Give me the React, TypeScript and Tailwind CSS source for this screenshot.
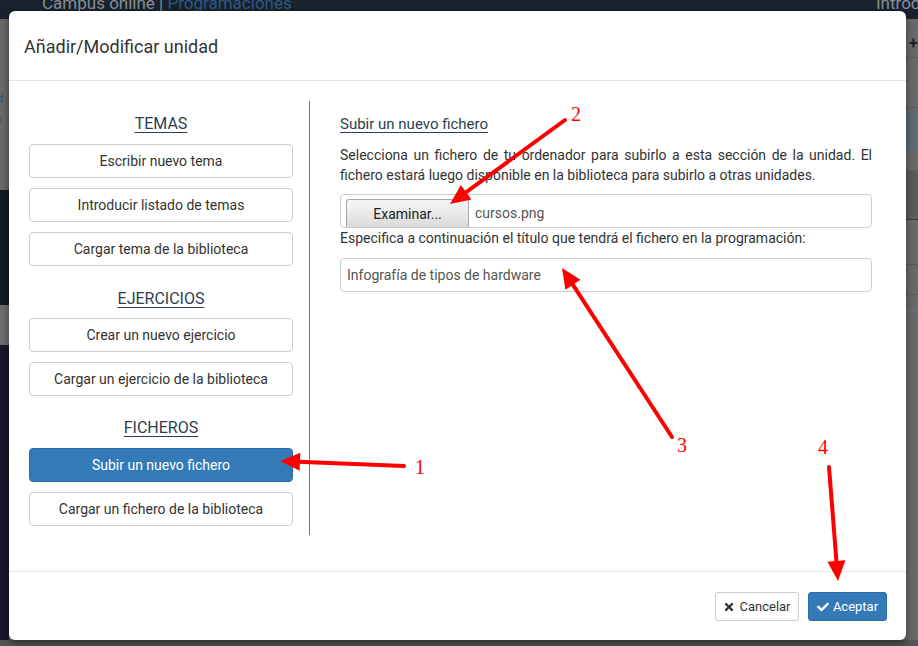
import { FaCheck, FaTimes } from "react-icons/fa";

const font = { fontFamily: "Roboto, 'Liberation Sans', sans-serif" };

type Pt = [number, number];

function Arrow({ from, to }: { from: Pt; to: Pt }) {
  const dx = to[0] - from[0];
  const dy = to[1] - from[1];
  const len = Math.hypot(dx, dy);
  const ux = dx / len;
  const uy = dy / len;
  const head = 20;
  const half = 9;
  const bx = to[0] - ux * head;
  const by = to[1] - uy * head;
  const pts = [
    `${to[0]},${to[1]}`,
    `${bx - uy * half},${by + ux * half}`,
    `${bx + uy * half},${by - ux * half}`,
  ].join(" ");
  return (
    <g>
      <line x1={from[0]} y1={from[1]} x2={bx + ux * 2} y2={by + uy * 2} stroke="#ff0000" strokeWidth={4} strokeLinecap="round" />
      <polygon points={pts} fill="#ff0000" />
    </g>
  );
}

function Annotations() {
  return (
    <svg className="pointer-events-none absolute inset-0" width={918} height={646} viewBox="0 0 918 646">
      <Arrow from={[404, 466]} to={[280, 461]} />
      <Arrow from={[565, 120]} to={[450, 204]} />
      <Arrow from={[672, 437]} to={[562, 268]} />
      <Arrow from={[829, 467]} to={[838, 581]} />
      <g fill="#ff0000" fontSize={20} fontFamily="'Liberation Serif', serif">
        <text x={415} y={474}>1</text>
        <text x={571} y={121}>2</text>
        <text x={677} y={452}>3</text>
        <text x={818} y={454}>4</text>
      </g>
    </svg>
  );
}

function SideButton({ label, active }: { label: string; active?: boolean }) {
  return (
    <div
      className={
        active
          ? "flex h-[34px] items-center justify-center rounded-[4px] border border-[#2e6da4] bg-[#337ab7] text-[14px] text-white"
          : "flex h-[34px] items-center justify-center rounded-[4px] border border-[#cccccc] bg-white text-[14px] text-[#333]"
      }
    >
      {label}
    </div>
  );
}

function Heading({ children }: { children: string }) {
  return (
    <div className="flex h-[22px] items-center justify-center text-[16px] text-[#2c3e50] underline underline-offset-[3px]">
      {children}
    </div>
  );
}

function Backdrop() {
  return (
    <div className="flex h-[646px] w-[918px] flex-col bg-[#6b6b6b]">
      <div className="flex h-[19px] items-end justify-between bg-[#19222d] px-[42px] text-[17px] leading-[19px] text-[#8a9099]">
        <div className="-translate-y-[6px]">
          Campus online | <span className="text-[#2d5a84]">Programaciones</span>
        </div>
        <div className="-mr-[42px] -translate-y-[6px] w-[42px] overflow-hidden whitespace-nowrap">Introd</div>
      </div>
      <div className="flex flex-1">
        <div className="flex w-[9px] flex-col">
          <div className="h-[171px] bg-[#6b6b6b] pt-[70px] text-[13px] leading-[20px]">
            <div className="-ml-[4px] text-[#2a5a80]">d</div>
            <div className="-ml-[4px] text-[#555]">s</div>
          </div>
          <div className="h-[115px] bg-[#131a22]" />
          <div className="h-[40px] bg-[#707070]" />
          <div className="flex-1 bg-[#18182c]" />
        </div>
        <div className="flex-1" />
        <div className="flex w-[12px] flex-col bg-[#6a6a6a]">
          <div className="h-[10px]" />
          <div className="h-[29px] border-b border-[#5a5a5a] pl-[3px] text-[16px] font-bold leading-[29px] text-[#222]">+</div>
          <div className="h-[50px] border-b border-[#5a5a5a]" />
          <div className="h-[42px] bg-[#5f6b72]" />
          <div className="h-[20px]" />
          <div className="h-[50px] border-b border-dashed border-[#333] bg-[#5c5c5c]" />
          <div className="h-[45px] border-b border-[#5a5a5a]" />
          <div className="h-[30px] border-b border-[#5a5a5a]" />
          <div className="h-[16px] border-b border-[#5f7a86]" />
          <div className="flex-1" />
        </div>
      </div>
      <div className="h-[6px] bg-[#555]" />
    </div>
  );
}

export default function App() {
  return (
    <div className="relative h-[646px] w-[918px] overflow-hidden" style={font}>
      <Backdrop />
      <div className="absolute left-[9px] top-[11px] flex h-[629px] w-[897px] flex-col rounded-[6px] bg-white shadow-[0_3px_9px_rgba(0,0,0,0.5)]">
        <div className="flex h-[70px] items-center border-b border-[#e5e5e5] px-[15px] pt-[2px] text-[18px] text-[#333]">
          Añadir/Modificar unidad
        </div>
        <div className="flex flex-1 px-[20px] pt-[20px]">
          <div className="flex h-[434px] w-[281px] flex-col border-r border-[#777] pr-[16px]">
            <div className="pt-[12px]" />
            <Heading>TEMAS</Heading>
            <div className="mt-[9px] flex flex-col gap-[10px]">
              <SideButton label="Escribir nuevo tema" />
              <SideButton label="Introducir listado de temas" />
              <SideButton label="Cargar tema de la biblioteca" />
            </div>
            <div className="mt-[22px]">
              <Heading>EJERCICIOS</Heading>
            </div>
            <div className="mt-[8px] flex flex-col gap-[10px]">
              <SideButton label="Crear un nuevo ejercicio" />
              <SideButton label="Cargar un ejercicio de la biblioteca" />
            </div>
            <div className="mt-[21px]">
              <Heading>FICHEROS</Heading>
            </div>
            <div className="mt-[9px] flex flex-col gap-[10px]">
              <SideButton label="Subir un nuevo fichero" active />
              <SideButton label="Cargar un fichero de la biblioteca" />
            </div>
          </div>
          <div className="flex w-[562px] flex-col pl-[30px] text-[14px] leading-[20px] text-[#333]">
            <div className="mt-[12px] h-[22px] text-[15px] leading-[22px] text-[#2c3e50] underline underline-offset-[3px]">
              Subir un nuevo fichero
            </div>
            <p className="mt-[10px] text-justify">
              Selecciona un fichero de tu ordenador para subirlo a esta sección de la unidad. El fichero estará luego disponible en la biblioteca para subirlo a otras unidades.
            </p>
            <div className="mt-[9px] flex h-[34px] items-end rounded-[4px] border border-[#cccccc] pl-[5px]">
              <div className="flex h-[28px] w-[123px] items-center justify-center rounded-t-[3px] border border-b-0 border-[#a9a9a9] bg-gradient-to-b from-[#f7f7f7] to-[#dadada] text-[14px] text-[#222]">
                Examinar...
              </div>
              <div className="flex h-[28px] items-center pl-[6px] text-[#555]">cursos.png</div>
            </div>
            <div>Especifica a continuación el título que tendrá el fichero en la programación:</div>
            <div className="mt-[10px] flex h-[34px] items-center rounded-[4px] border border-[#cccccc] px-[6px] text-[#555]">
              Infografía de tipos de hardware
            </div>
          </div>
        </div>
        <div className="flex h-[69px] items-center justify-end gap-[9px] border-t border-[#e5e5e5] px-[19px] pt-[1px]">
          <div className="flex h-[29px] w-[84px] items-center justify-center gap-[4px] rounded-[3px] border border-[#cccccc] bg-white text-[13px] text-[#333]">
            <FaTimes className="h-[12px] w-[12px]" />
            Cancelar
          </div>
          <div className="flex h-[29px] w-[79px] items-center justify-center gap-[4px] rounded-[3px] border border-[#2e6da4] bg-[#337ab7] text-[13px] text-white">
            <FaCheck className="h-[12px] w-[12px]" />
            Aceptar
          </div>
        </div>
      </div>
      <Annotations />
    </div>
  );
}
